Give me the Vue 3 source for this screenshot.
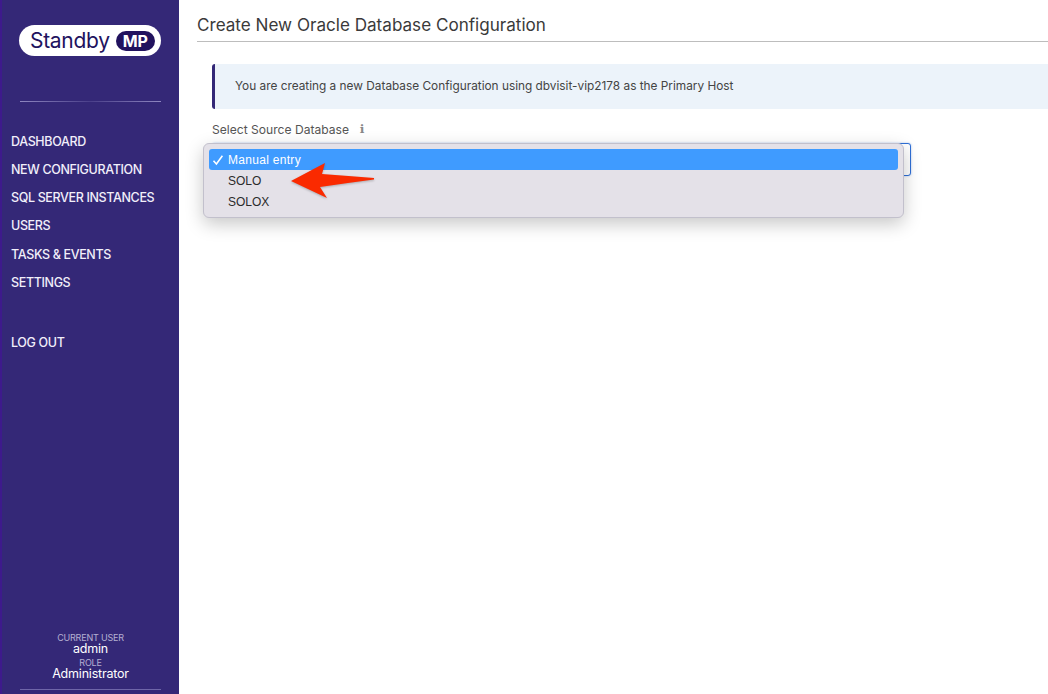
<script setup>
const nav = ['DASHBOARD', 'NEW CONFIGURATION', 'SQL SERVER INSTANCES', 'USERS', 'TASKS & EVENTS', 'SETTINGS']
const options = ['SOLO', 'SOLOX']
</script>

<template>
  <div class="page">
    <aside class="side">
      <div class="logo">
        <span class="logo-word">Standby</span>
        <span class="logo-mp">MP</span>
      </div>
      <div class="rule top"></div>
      <nav class="nav">
        <a v-for="n in nav" :key="n" class="nav-item">{{ n }}</a>
        <a class="nav-item logout">LOG OUT</a>
      </nav>
      <div class="user">
        <div class="u-label">CURRENT USER</div>
        <div class="u-value">admin</div>
        <div class="u-label role">ROLE</div>
        <div class="u-value">Administrator</div>
      </div>
      <div class="rule bottom"></div>
    </aside>
    <main class="main">
      <h1 class="title">Create New Oracle Database Configuration</h1>
      <div class="body">
        <div class="alert">You are creating a new Database Configuration using dbvisit-vip2178 as the Primary Host</div>
        <div class="label-row">
          <span class="label">Select Source Database</span>
          <span class="info">ℹ</span>
        </div>
        <div class="select-wrap">
          <div class="select"></div>
          <div class="menu">
            <div class="opt active">
              <svg class="check" viewBox="0 0 12 12" width="12" height="12"><path d="M1.5 6.8 4.4 10 10.4 1.8" fill="none" stroke="#fff" stroke-width="1.6"/></svg>
              Manual entry
            </div>
            <div v-for="o in options" :key="o" class="opt">{{ o }}</div>
          </div>
          <svg class="arrow" viewBox="0 0 88 40" width="88" height="40">
            <path d="M2 20 36 2 33 13 Q60 15 85 17 L85 18.5 Q58 22 31 26 L38 37 Z" fill="#fa2a00"/>
          </svg>
        </div>
      </div>
    </main>
  </div>
</template>

<style>
html, body { margin: 0; background: #fff; }
</style>

<style scoped>
.page {
  display: flex;
  width: 1048px;
  height: 694px;
  overflow: hidden;
  font-family: Inter, "Liberation Sans", sans-serif;
}
.side {
  width: 177px;
  flex: none;
  display: flex;
  flex-direction: column;
  background: #342877;
  border-left: 2px solid #3e1a8c;
  color: #fff;
}
.logo {
  margin: 25px 0 0 17px;
  width: 142px;
  height: 31px;
  box-sizing: border-box;
  background: #fff;
  border-radius: 16px;
  display: flex;
  align-items: center;
  padding-left: 11px;
  gap: 6px;
}
.logo-word {
  font-size: 21px;
  letter-spacing: -0.3px;
  color: #21125e;
}
.logo-mp {
  background: #21125e;
  color: #fff;
  font-size: 16px;
  font-weight: 700;
  line-height: 20px;
  border-radius: 10px;
  padding: 0 7px;
}
.rule {
  height: 1px;
  width: 141px;
  margin-left: 18px;
  background: linear-gradient(90deg, #8e86c0, #4a3f8a 50%, #8e86c0);
}
.rule.top { margin-top: 45px; }
.rule.bottom { margin-bottom: 4px; background: #6e65a8; }
.nav {
  display: flex;
  flex-direction: column;
  margin-top: 26px;
}
.nav-item {
  height: 28.15px;
  line-height: 28.15px;
  padding-left: 9px;
  font-size: 12.5px;
  font-weight: 500;
  letter-spacing: -0.36px;
  color: #f1effa;
}
.logout { margin-top: 32px; }
.user {
  margin-top: auto;
  margin-bottom: 9px;
  text-align: center;
}
.u-label {
  font-size: 9px;
  line-height: 9px;
  letter-spacing: -0.2px;
  color: #b5b0d2;
}
.role { margin-top: 3px; }
.u-value {
  font-size: 12.5px;
  line-height: 13px;
  letter-spacing: -0.2px;
  color: #fff;
}
.main {
  flex: 1;
  min-width: 0;
  padding-left: 18px;
}
.title {
  margin: 0;
  height: 42px;
  box-sizing: border-box;
  padding-top: 15px;
  font-size: 17.1px;
  line-height: 20px;
  font-weight: 400;
  color: #3a3a3a;
  border-bottom: 1px solid #bdbdbd;
}
.body { padding: 22px 0 0 15px; }
.alert {
  height: 45px;
  box-sizing: border-box;
  padding-left: 20px;
  line-height: 44px;
  font-size: 11.83px;
  color: #444;
  background: #ecf3fa;
  border-left: 3px solid #342877;
  border-radius: 3px 0 0 3px;
  margin-right: -20px;
}
.label-row {
  display: flex;
  align-items: center;
  gap: 11px;
  margin-top: 13px;
  height: 14px;
  font-size: 12.1px;
  color: #555;
}
.info {
  font-family: "DejaVu Sans", sans-serif;
  font-size: 12px;
  color: #888;
}
.select-wrap {
  position: relative;
  margin-top: 7px;
}
.select {
  width: 699px;
  height: 33px;
  box-sizing: border-box;
  border: 1px solid #2f6fd6;
  border-radius: 3px;
  background: #fff;
  box-shadow: 0 0 2px rgba(47, 111, 214, 0.45);
}
.menu {
  position: absolute;
  left: -9px;
  top: 0;
  width: 701px;
  height: 75px;
  box-sizing: border-box;
  padding: 5px 5px;
  background: #e4e1e8;
  border: 1px solid #c2c0cc;
  border-radius: 6px;
  box-shadow: 0 6px 18px rgba(0, 0, 0, 0.22);
  font-family: "Liberation Sans", sans-serif;
  font-size: 12px;
  color: #2b2b2b;
}
.opt {
  height: 21px;
  line-height: 22px;
  padding-left: 19px;
  position: relative;
  border-radius: 3px;
}
.opt.active {
  background: #3f9bff;
  color: #fff;
  letter-spacing: 0.3px;
}
.check { position: absolute; left: 3px; top: 5px; }
.arrow {
  position: absolute;
  left: 77px;
  top: 18px;
  filter: drop-shadow(0 1px 1px rgba(0, 0, 0, 0.25));
}
</style>
